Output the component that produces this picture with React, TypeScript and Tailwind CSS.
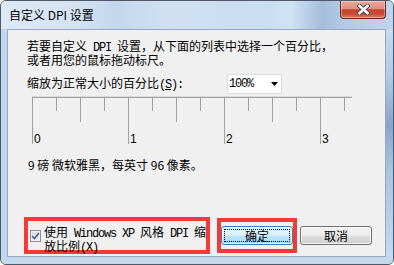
import React from 'react';

function L({ children }: { children: React.ReactNode }) {
  return <span className="font-['Liberation_Mono',monospace] tracking-[-1.2px]">{children}</span>;
}

function Ruler() {
  const ticks = Array.from({ length: 14 }, (_, i) => i);
  return (
    <svg width="377" height="52" className="block">
      <line x1="24" y1="2.5" x2="344" y2="2.5" stroke="#dadada" />
      <line x1="24" y1="3.5" x2="344" y2="3.5" stroke="#a0a0a0" />
      {ticks.map((i) => {
        const x = 24 + i * 24 + 0.5;
        const end = i % 4 === 0 ? 50 : i % 2 === 0 ? 28 : 17;
        return <line key={i} x1={x} y1="3" x2={x} y2={end} stroke="#a0a0a0" />;
      })}
      {[0, 1, 2, 3].map((n) => (
        <text
          key={n}
          x={24 + n * 96 + 2}
          y="49"
          fontSize="12"
          fontFamily="Liberation Sans, sans-serif"
          fill="#000"
        >
          {n}
        </text>
      ))}
    </svg>
  );
}

function CloseButton() {
  return (
    <div className="mr-[7px] ml-auto flex h-[18px] w-[46px] items-center justify-center rounded-b-[4px] border border-t-0 border-[#6a2a22] bg-[linear-gradient(180deg,#e9ab9c_0%,#de8e7b_45%,#c6432b_52%,#c84a32_75%,#d97a62_100%)] shadow-[inset_0_0_0_1px_rgba(255,255,255,0.35)]">
      <svg width="13" height="11" viewBox="0 0 13 11">
        <path d="M2.5 2 L10.5 9 M10.5 2 L2.5 9" stroke="#4a4f63" strokeWidth="4.4" strokeLinecap="square" />
        <path d="M2.5 2 L10.5 9 M10.5 2 L2.5 9" stroke="#ffffff" strokeWidth="2.4" strokeLinecap="square" />
      </svg>
    </div>
  );
}

export default function App() {
  return (
    <div className="h-[265px] w-[394px] bg-white">
      <div className="flex h-full w-full flex-col overflow-hidden rounded-[6px] border border-[#4f5866] bg-[#c2d6ec] font-['Noto_Sans_CJK_SC',sans-serif] text-[12px] text-black shadow-[inset_0_0_0_1px_rgba(255,255,255,0.5)]">
        <div className="flex h-[28px] shrink-0 items-start bg-[linear-gradient(90deg,#dde9f6_0%,#d3e2f2_20%,#c3d7ed_29%,#cfe0f2_42%,#cadef2_68%,#d0e3f5_74%,#a4bdda_82%,#b3cbe6_88%,#bed4ec_100%)]">
          <span className="mt-[6px] ml-[8px] leading-[16px]">自定义 DPI 设置</span>
          <CloseButton />
        </div>
        <div className="flex flex-1">
          <div className="w-[6px] bg-[#c3d7ed]" />
          <div className="flex w-[379px] flex-col border border-[#97a8be] bg-[#f0f0f0]">
            <p className="mt-[10px] pl-[19px] leading-[12px]">
              若要自定义<L> DPI </L>设置，从下面的列表中选择一个百分比，
              <br />
              或者用您的鼠标拖动标尺。
            </p>
            <div className="mt-[8px] flex h-[20px] items-center pl-[19px]">
              <span className="w-[200px] leading-[12px]">
                缩放为正常大小的百分比<L>(<u>S</u>):</L>
              </span>
              <div className="flex h-[20px] w-[55px] items-center border border-[#dcdcdc] bg-white pl-[1px]">
                <L>100%</L>
                <svg width="7" height="4" className="ml-auto mr-[3px]">
                  <path d="M0 0 H7 L3.5 4 Z" fill="#000" />
                </svg>
              </div>
            </div>
            <Ruler />
            <p className="mt-[11px] pl-[20px] leading-[16px]">9 磅 微软雅黑，每英寸 96 像素。</p>
            <div className="mt-auto mb-[2px] flex items-center pl-[16px]">
              <div className="flex h-[37px] w-[186px] items-start border-[4px] border-[#f23b36]">
                <span className="mt-[9px] ml-[2px] flex h-[12px] w-[12px] items-center justify-center border border-[#8e8f8f] bg-[linear-gradient(135deg,#d8d8d8,#f8f8f8)] shadow-[inset_0_0_0_1px_#f4f4f4]">
                  <svg width="9" height="8" viewBox="0 0 9 8">
                    <path d="M1 4 L3.5 6.5 L8 1" fill="none" stroke="#45609b" strokeWidth="1.7" />
                  </svg>
                </span>
                <span className="mt-[5px] ml-[3px] whitespace-nowrap leading-[12px]">
                  使用<L> Windows XP </L>风格<L> DPI </L>缩
                  <br />
                  放比例<L>(X)</L>
                </span>
              </div>
              <div className="ml-[7px] flex h-[35px] w-[80px] items-center border-[4px] border-[#f23b36]">
                <button className="h-[19px] w-[72px] rounded-[3px] border border-[#3c7fb1] bg-[linear-gradient(180deg,#eaf6fd_0%,#d9f0fc_50%,#bee6fd_50%,#a7d9f5_100%)] leading-[16px] shadow-[inset_0_0_0_1px_rgba(255,255,255,0.6)] outline-1 outline-offset-[-4px] outline-black outline-dotted">
                  确定
                </button>
              </div>
              <button className="ml-[3px] h-[19px] w-[72px] rounded-[3px] border border-[#707070] bg-[linear-gradient(180deg,#f2f2f2_0%,#ebebeb_50%,#dddddd_50%,#cfcfcf_100%)] leading-[16px] shadow-[inset_0_0_0_1px_rgba(255,255,255,0.7)]">
                取消
              </button>
            </div>
          </div>
          <div className="w-[7px] bg-[linear-gradient(180deg,#c6d9ee_0%,#b3cbe6_20%,#86a5cf_42%,#aac3e0_62%,#c4d8ee_100%)]" />
        </div>
        <div className="h-[7px] shrink-0 bg-[#c4d8ee]" />
      </div>
    </div>
  );
}
